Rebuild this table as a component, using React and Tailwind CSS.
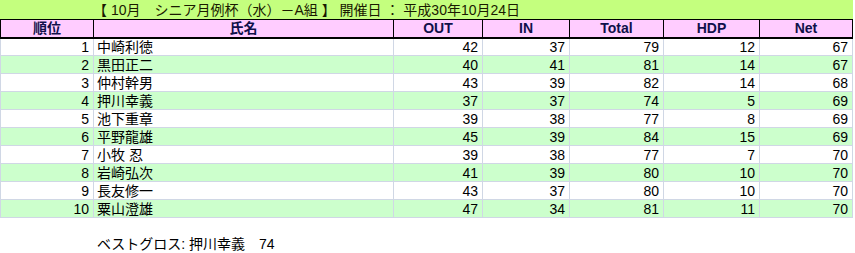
import React from 'react';

const rows = [
  [1, '中崎利徳', 42, 37, 79, 12, 67],
  [2, '黒田正二', 40, 41, 81, 14, 67],
  [3, '仲村幹男', 43, 39, 82, 14, 68],
  [4, '押川幸義', 37, 37, 74, 5, 69],
  [5, '池下重章', 39, 38, 77, 8, 69],
  [6, '平野龍雄', 45, 39, 84, 15, 69],
  [7, '小牧 忍', 39, 38, 77, 7, 70],
  [8, '岩崎弘次', 41, 39, 80, 10, 70],
  [9, '長友修一', 43, 37, 80, 10, 70],
  [10, '粟山澄雄', 47, 34, 81, 11, 70],
];

const heads = ['順位', '氏名', 'OUT', 'IN', 'Total', 'HDP', 'Net'];

const App = () => {
  return (
    <div
      className="w-[855px] h-[253px] bg-white text-[14px] leading-[16px] text-black"
      style={{ fontFamily: '"Liberation Sans", "Noto Sans CJK JP", sans-serif' }}
    >
      <div className="w-[853px] h-[19px] bg-[#c4ff7e] pl-[93px] flex items-center whitespace-pre text-[#1a1a00]">
        【 10月　シニア月例杯（水）－A組 】 開催日 ： 平成30年10月24日
      </div>
      <table className="table-fixed border-collapse w-[852px]">
        <colgroup>
          <col className="w-[93px]" />
          <col className="w-[300px]" />
          <col className="w-[89px]" />
          <col className="w-[87px]" />
          <col className="w-[94px]" />
          <col className="w-[96px]" />
          <col className="w-[93px]" />
        </colgroup>
        <thead>
          <tr className="h-[18px] bg-[#ffccff]">
            {heads.map((h) => (
              <th
                key={h}
                className="border border-black border-b-2 p-0 font-bold text-[14px] text-[#10104a] text-center align-middle"
              >
                {h}
              </th>
            ))}
          </tr>
        </thead>
        <tbody>
          {rows.map((r, i) => (
            <tr key={r[0]} className={`h-[18px] ${i % 2 === 1 ? 'bg-[#ccffcc]' : 'bg-white'}`}>
              {r.map((v, j) => (
                <td
                  key={j}
                  className={`border border-[#d0d7e5] p-0 align-middle ${j === 1 ? 'text-left pl-[3px]' : 'text-right pr-[4px]'}`}
                >
                  {v}
                </td>
              ))}
            </tr>
          ))}
        </tbody>
      </table>
      <div className="pl-[97px] pt-[18px] whitespace-pre">ベストグロス: 押川幸義　74</div>
    </div>
  );
};

export default App;
